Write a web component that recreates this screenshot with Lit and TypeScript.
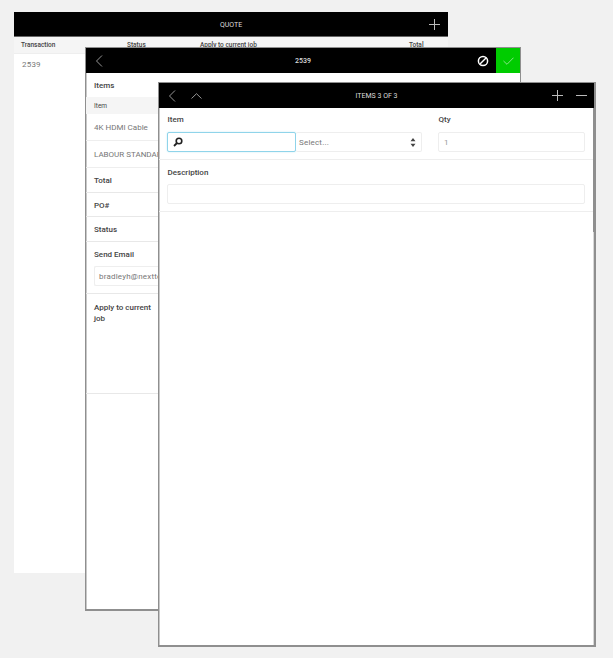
import { LitElement, html, css } from "lit";
import { customElement } from "lit/decorators.js";

const plus = html`<svg width="11" height="11" viewBox="0 0 11 11"><path d="M5.5 0V11M0 5.5H11" stroke="#bbb" stroke-width="1" fill="none"/></svg>`;
const back = html`<svg width="8" height="12" viewBox="0 0 8 12"><path d="M7 .5L1.5 6L7 11.5" stroke="#bbb" stroke-width=".8" fill="none"/></svg>`;

@customElement("app-root")
export class AppRoot extends LitElement {
  static styles = css`
    :host { display: block; position: relative; width: 613px; height: 658px; background: #f1f1f1; overflow: hidden;
      font-family: Roboto, "Liberation Sans", sans-serif; color: #444; font-size: 8px; }
    .win { position: absolute; background: #fff; box-sizing: border-box; }
    .w1 { left: 14px; top: 12px; width: 434px; height: 561px; }
    .w2 { left: 85px; top: 47px; width: 436px; height: 564px; border: solid #8f8f8f; border-width: 1px 1px 2px 1px; box-shadow: inset 1px 0 0 #c8c8c8; }
    .w3 { left: 158px; top: 82px; width: 438px; height: 565px; border: solid #8f8f8f; border-width: 1px 2px 2px 1px; box-shadow: inset 1px 0 0 #c8c8c8; }
    .thumb { position: absolute; right: 0; top: 25px; bottom: 0; width: 1px; background: #d8d8d8; }
    .thumb i { display: block; height: 124px; background: #8f8f8f; }
    .bar { background: #000; color: #fff; display: flex; align-items: center; position: relative; box-sizing: border-box; }
    .w1 .bar { height: 25px; border-bottom: 1px solid #666; }
    .w2 .bar, .w3 .bar { height: 25px; }
    .title { position: absolute; left: 0; right: 0; text-align: center; font-size: 7px; color: #ddd; padding-top: 1px; }
    .w2 .title { padding-top: 0; font-weight: 500; }
    .acts { margin-left: auto; display: flex; align-items: center; position: relative; }
    .thead { display: grid; grid-template-columns: 106px 73px 190px 1fr; background: #f5f5f5; height: 16px; align-items: center;
      padding-left: 7px; font-size: 6.5px; font-weight: 500; border-bottom: 1px solid #eee; }
    .thead span:last-child { padding-left: 19px; }
    .cell { padding: 6px 8px; font-size: 8px; color: #777; letter-spacing: .2px; }
    .back { padding-left: 9px; display: flex; position: relative; }
    .ban { margin-right: 7px; display: flex; }
    .ok { width: 24px; height: 25px; background: #00cc00; display: flex; align-items: center; justify-content: center; }
    .sec { box-sizing: border-box; border-bottom: 1px solid #e8e8e8; padding: 0 8px; display: flex; align-items: center; font-weight: 500; font-size: 8px; }
    .items { height: 24px; border: 0; }
    .ihead { box-sizing: border-box; height: 17px; background: #f5f5f5; padding-left: 8px; display: flex; align-items: center; font-size: 6.5px; }
    .row { box-sizing: border-box; height: 27px; padding-left: 8px; display: flex; align-items: center; border-bottom: 1px solid #eee; font-size: 8px; color: #777; white-space: nowrap; }
    .sec24 { height: 24.5px; padding-top: 2px; }
    .email { display: block; padding: 8.5px 8px 0; height: 52px; }
    .in { box-sizing: border-box; border: 1px solid #eee; border-radius: 2px; height: 20px; display: flex; align-items: center; background: #fff; color: #777; font-size: 8px; font-weight: 400; }
    .email .in { margin-top: 7px; padding-left: 4px; letter-spacing: .2px; white-space: nowrap; overflow: hidden; border-right: 0; }
    .apply { align-items: flex-start; height: 100px; padding-top: 8px; line-height: 11px; }
    .apply div { width: 60px; }
    .w3 .body { display: flex; flex-direction: column; }
    .form { display: grid; grid-template-columns: 255px 147px; column-gap: 16px; padding: 2px 8px 7px; border-bottom: 1px solid #eee; }
    .lab { font-weight: 500; height: 18px; display: flex; align-items: center; margin-bottom: 4px; padding-left: .5px; }
    .pick { display: flex; }
    .search { width: 129px; border: 1px solid #8fd4ea; box-shadow: 0 0 2px #c5e9f4; padding-left: 5px; }
    .select { flex: 1; padding: 0 5px 0 3px; border-left: 0; justify-content: space-between; letter-spacing: .2px; }
    .qty { padding-left: 5px; color: #999; }
    .desc { padding: 3px 8px 7px; border-bottom: 1px solid #eee; }
    .desc .lab { margin-bottom: 3px; }
    .desc .in { width: 418px; }
    .addmin { display: flex; gap: 13px; padding-right: 7px; }
    .up { margin-left: 15px; display: flex; position: relative; }
  `;

  render() {
    return html`
      <div class="win w1">
        <div class="bar">
          <div class="title">QUOTE</div>
          <div class="acts" style="padding-right:8px">${plus}</div>
        </div>
        <div class="thead"><span>Transaction</span><span>Status</span><span>Apply to current job</span><span>Total</span></div>
        <div class="cell">2539</div>
      </div>

      <div class="win w2">
        <div class="bar">
          <div class="title">2539</div>
          <div class="back">${back}</div>
          <div class="acts">
            <div class="ban"><svg width="12" height="12" viewBox="0 0 12 12"><circle cx="6" cy="6" r="4.6" stroke="#fff" stroke-width="1.5" fill="none"/><path d="M3 9L9 3" stroke="#fff" stroke-width="1.5"/></svg></div>
            <div class="ok"><svg width="11" height="8" viewBox="0 0 11 8"><path d="M.5 4L4 7.3L10.5 .7" stroke="#a8e8a8" stroke-width=".8" fill="none"/></svg></div>
          </div>
        </div>
        <div class="sec items">Items</div>
        <div class="ihead">Item</div>
        <div class="row">4K HDMI Cable</div>
        <div class="row">LABOUR STANDARD</div>
        <div class="sec sec24">Total</div>
        <div class="sec sec24">PO#</div>
        <div class="sec sec24">Status</div>
        <div class="sec email">Send Email<div class="in">bradleyh@nexttech.com.au</div></div>
        <div class="sec apply"><div>Apply to current job</div></div>
      </div>

      <div class="win w3">
        <div class="bar">
          <div class="title">ITEMS 3 OF 3</div>
          <div class="back">${back}</div>
          <div class="up"><svg width="11" height="6" viewBox="0 0 11 6"><path d="M.5 5.5L5.5 .7L10.5 5.5" stroke="#bbb" stroke-width=".8" fill="none"/></svg></div>
          <div class="acts addmin">
            ${plus}
            <svg width="11" height="11" viewBox="0 0 11 11"><path d="M0 5.5H11" stroke="#bbb" stroke-width="1"/></svg>
          </div>
        </div>
        <div class="body">
          <div class="form">
            <div>
              <div class="lab">Item</div>
              <div class="pick">
                <div class="in search"><svg width="10" height="10" viewBox="0 0 10 10"><circle cx="6" cy="4" r="2.8" stroke="#222" stroke-width="1.6" fill="none"/><path d="M4 6L1 9" stroke="#222" stroke-width="1.8"/></svg></div>
                <div class="in select">Select...<svg width="6" height="9" viewBox="0 0 6 9"><path d="M3 0L5.5 3.2H.5ZM3 9L.5 5.8H5.5Z" fill="#444"/></svg></div>
              </div>
            </div>
            <div>
              <div class="lab">Qty</div>
              <div class="in qty">1</div>
            </div>
          </div>
          <div class="desc">
            <div class="lab">Description</div>
            <div class="in"></div>
          </div>
        </div>
        <div class="thumb"><i></i></div>
      </div>
    `;
  }
}
